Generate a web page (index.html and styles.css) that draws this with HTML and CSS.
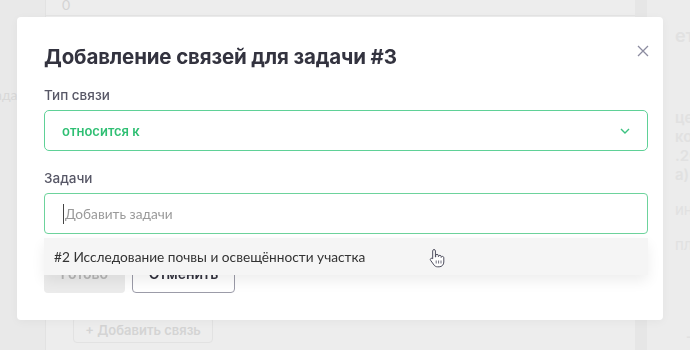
FILE: index.html
```html
<!DOCTYPE html>
<html lang="ru">
<head>
    <meta charset="UTF-8">
    <title>Связи задачи</title>
    <link rel="stylesheet" href="styles.css">
</head>
<body>
    <div class="page">
        <div class="side">
            <span class="side-label">Зада</span>
        </div>
        <div class="main">
            <div class="field-top">0</div>
            <div class="main-fill"></div>
            <button class="add-link">+ Добавить связь</button>
        </div>
        <div class="gutter"></div>
        <div class="aside">
            <div class="aside-title">етапы</div>
            <div class="aside-row first">цена</div>
            <div class="aside-row">код</div>
            <div class="aside-row">.2024</div>
            <div class="aside-row">а)</div>
            <div class="aside-row low">инфо</div>
            <div class="aside-row low">план</div>
            <div class="aside-plus">+</div>
        </div>
    </div>

    <div class="modal">
        <div class="modal-head">
            <h2>Добавление связей для задачи #3</h2>
            <span class="close">
                <svg width="12" height="12" viewBox="0 0 12 12"><path d="M1 1L11 11M11 1L1 11" stroke="#8c8ca0" stroke-width="1.3" fill="none"/></svg>
            </span>
        </div>

        <div class="label">Тип связи</div>
        <div class="select">
            <span>относится к</span>
            <svg width="10" height="6" viewBox="0 0 10 6"><path d="M1 1L5 5L9 1" stroke="#3cc281" stroke-width="1.4" fill="none"/></svg>
        </div>

        <div class="label">Задачи</div>
        <div class="tasks-field">
            <div class="input"><span class="caret"></span>Добавить задачи</div>
            <div class="suggest">
                #2 Исследование почвы и освещённости участка
                <svg class="pointer" width="16" height="20" viewBox="0 0 16 20">
                    <path d="M5 1.5c.8 0 1.4.6 1.4 1.4v6.2l.3-.1V7.6c0-.8.6-1.3 1.3-1.3s1.3.5 1.3 1.3v1l.3-.1c0-.7.6-1.2 1.3-1.2s1.3.5 1.3 1.3v.8c.2-.6.7-1 1.3-1s1.3.6 1.3 1.3v4.3c0 2.7-1.9 4.8-4.6 4.8H8.6c-1.5 0-2.7-.6-3.6-1.8L1.6 12.3c-.5-.6-.4-1.4.2-1.8.6-.4 1.3-.3 1.8.2l.1.1V2.9c0-.8.6-1.4 1.3-1.4z" fill="#fff" stroke="#4a4a5a" stroke-width="1"/>
                    <path d="M7.2 12.5v3M9.6 12.5v3M12 12.5v3" stroke="#4a4a5a" stroke-width=".8"/>
                </svg>
            </div>
        </div>

        <div class="actions">
            <button class="btn btn-done">Готово</button>
            <button class="btn btn-cancel">Отменить</button>
        </div>
    </div>
</body>
</html>
```

FILE: styles.css
```css
* {
    margin: 0;
    padding: 0;
    box-sizing: border-box;
}

body {
    width: 690px;
    height: 350px;
    overflow: hidden;
    background: #e9e9e9;
    font-family: 'Lato', sans-serif;
}

/* страница под затемнением */
.page {
    display: flex;
    height: 350px;
}

.side {
    width: 45px;
    padding-top: 86px;
    overflow: hidden;
}

.side-label {
    display: block;
    margin-left: -13px;
    font-size: 14px;
    color: #d8d8d8;
}

.main {
    width: 590px;
    display: flex;
    flex-direction: column;
    background: #ededed;
    border-left: 1px solid #e2e2e2;
}

.field-top {
    height: 22px;
    padding: 0 0 0 16px;
    margin-top: -6px;
    font-size: 14px;
    line-height: 22px;
    color: #d4d4d4;
    border-bottom: 1px solid #e4e4e4;
}

.main-fill {
    flex: 1;
}

.add-link {
    align-self: flex-start;
    margin: 0 0 7px 27px;
    width: 140px;
    height: 26px;
    border: 1px solid #e2e2e2;
    border-radius: 4px;
    background: #ededed;
    color: #d4d4d4;
    font-family: 'Inter', sans-serif;
    font-size: 13px;
    font-weight: 600;
}

.gutter {
    width: 12px;
    background: #e6e6e6;
}

.aside {
    flex: 1;
    background: #ececec;
    padding-left: 28px;
    white-space: nowrap;
    overflow: hidden;
    color: #e1e1e1;
    font-family: 'Inter', sans-serif;
    font-size: 15px;
    font-weight: 600;
}

.aside-title {
    margin-top: 25px;
    font-size: 18px;
}

.aside-row {
    line-height: 19px;
}

.aside-row.first {
    margin-top: 62px;
}

.aside-row.low {
    margin-top: 16px;
    font-weight: 400;
}

.aside-plus {
    margin: 70px 0 0 10px;
    font-size: 20px;
    font-weight: 400;
}

/* модальное окно */
.modal {
    position: fixed;
    top: 17px;
    left: 17px;
    width: 646px;
    height: 303px;
    background: #fff;
    border-radius: 4px;
    box-shadow: 0 2px 10px rgba(0, 0, 0, 0.04);
    padding: 24px 15px 0 27px;
}

.modal-head {
    display: flex;
    justify-content: space-between;
    align-items: flex-start;
    height: 46px;
}

.modal-head h2 {
    font-family: 'Inter', sans-serif;
    font-size: 20.5px;
    font-weight: 700;
    color: #33333f;
    letter-spacing: -0.15px;
    line-height: 32px;
}

.close {
    margin: 4px -1px 0 0;
    display: flex;
}

.label {
    font-family: 'Inter', sans-serif;
    font-size: 13.5px;
    font-weight: 500;
    color: #575766;
    height: 17px;
    line-height: 17px;
}

.select {
    margin: 6px 0 19px;
    height: 41px;
    border: 1.5px solid #5fd197;
    border-radius: 5px;
    display: flex;
    align-items: center;
    justify-content: space-between;
    padding: 0 17px 0 17px;
    color: #2fbf73;
    font-family: 'Inter', sans-serif;
    font-size: 13px;
    font-weight: 600;
}

.tasks-field {
    position: relative;
    margin-top: 6px;
}

.input {
    height: 41px;
    border: 1.5px solid #6dd39c;
    border-radius: 4px;
    display: flex;
    align-items: center;
    padding-left: 18px;
    font-size: 13.7px;
    color: #9a9a9a;
}

.caret {
    width: 1px;
    height: 20px;
    background: #444;
    margin-right: 1px;
}

.suggest {
    position: absolute;
    top: 45px;
    left: 0;
    right: 0;
    height: 37px;
    z-index: 2;
    background: #f5f5f5;
    box-shadow: 0 6px 14px rgba(0, 0, 0, 0.07);
    display: flex;
    align-items: center;
    padding-left: 10px;
    font-size: 13.7px;
    color: #333;
}

.pointer {
    position: absolute;
    left: 385px;
    top: 10px;
}

.actions {
    display: flex;
    gap: 7px;
    margin-top: 19px;
}

.btn {
    height: 40px;
    border-radius: 4px;
    font-family: 'Inter', sans-serif;
    font-size: 14px;
    font-weight: 600;
}

.btn-done {
    width: 81px;
    border: none;
    background: #ebebeb;
    color: #b5b5b5;
}

.btn-cancel {
    width: 103px;
    background: #fff;
    border: 1px solid #9b9ba8;
    color: #33333f;
}
```
